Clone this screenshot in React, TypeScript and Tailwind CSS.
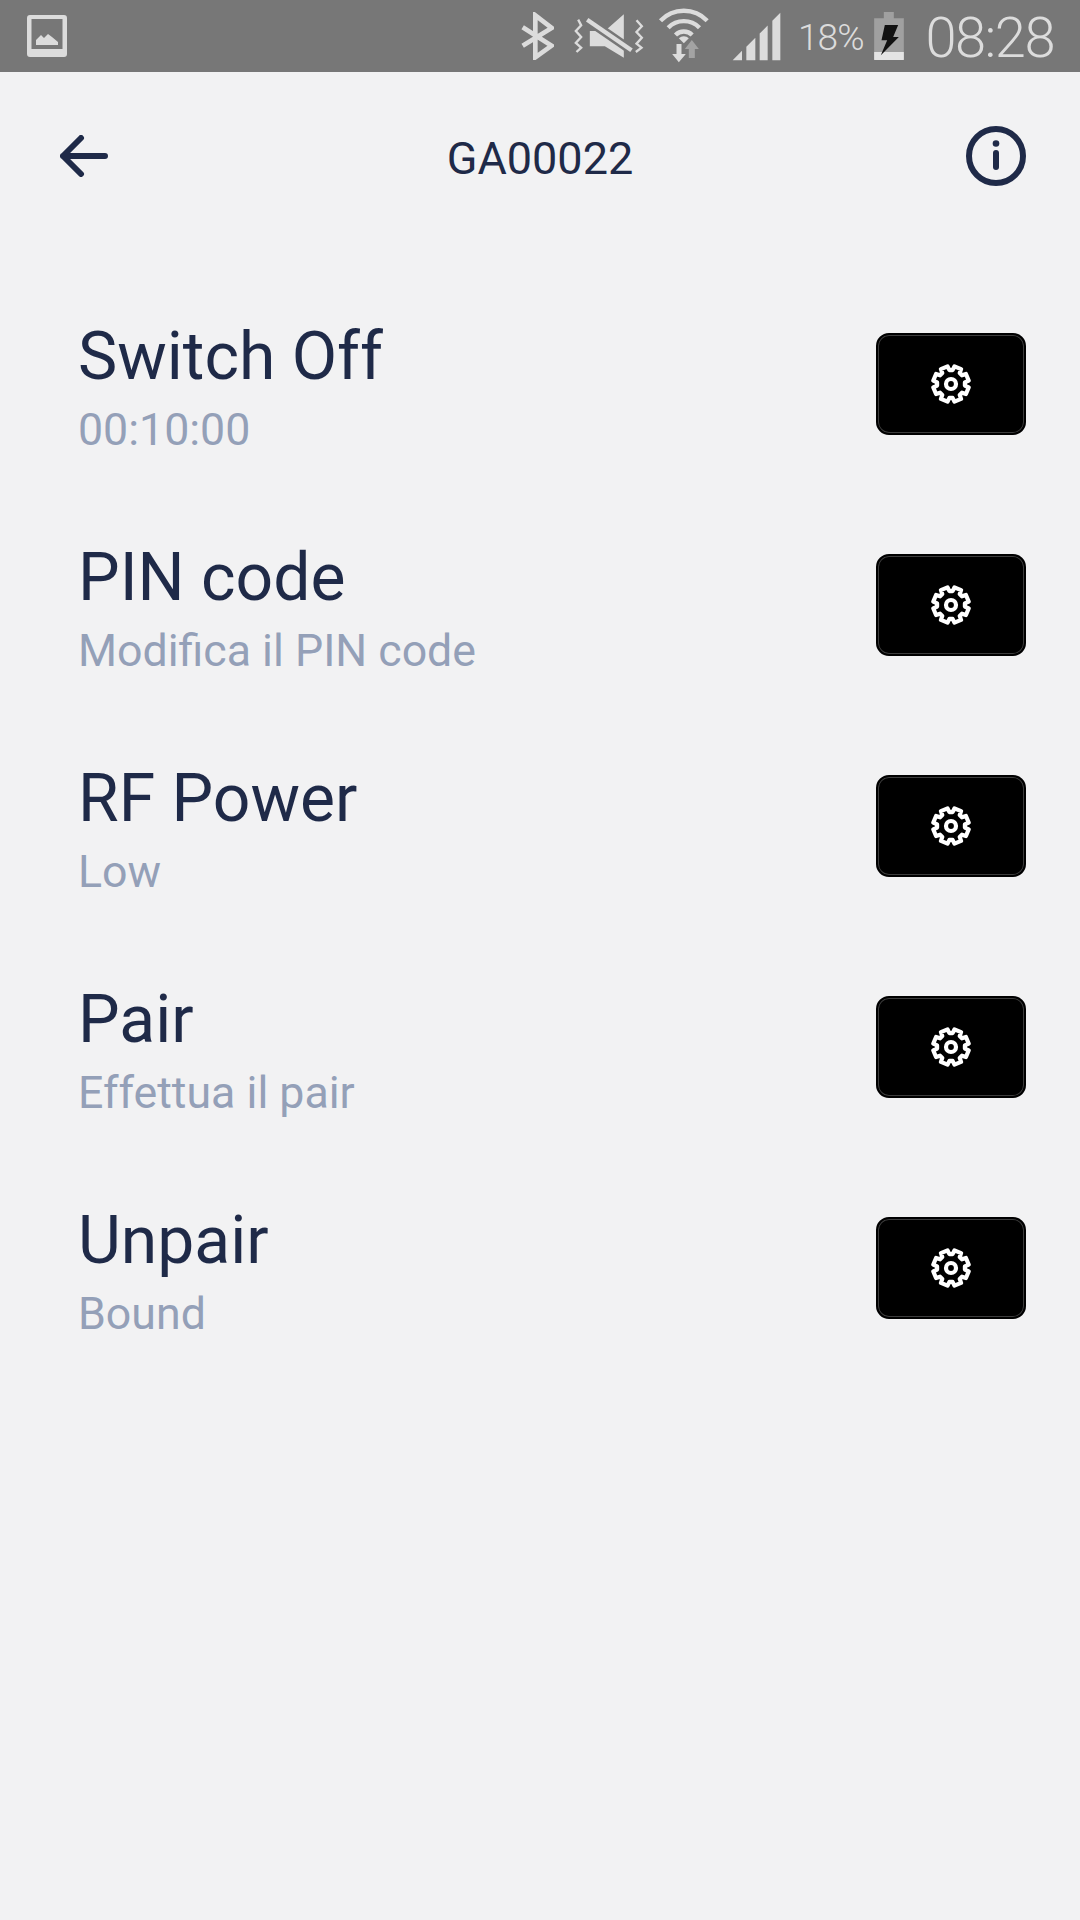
const rows = [
    { title: 'Switch Off', subtitle: '00:10:00' },
    { title: 'PIN code', subtitle: 'Modifica il PIN code' },
    { title: 'RF Power', subtitle: 'Low' },
    { title: 'Pair', subtitle: 'Effettua il pair' },
    { title: 'Unpair', subtitle: 'Bound' },
];

// eight rounded teeth, same shape as the icon in the buttons
function gearPath() {
    const pts: string[] = [];
    for (let i = 0; i < 8; i++) {
        const a = (i * Math.PI) / 4 + Math.PI / 8;
        [
            [-0.28, 14],
            [-0.2, 18],
            [0.2, 18],
            [0.28, 14],
        ].forEach(([d, r]) => {
            pts.push(`${(20 + r * Math.cos(a + d)).toFixed(2)} ${(20 + r * Math.sin(a + d)).toFixed(2)}`);
        });
    }
    return `M${pts.join('L')}Z`;
}

function GearIcon() {
    return (
        <svg width="40" height="40" viewBox="0 0 40 40" fill="none" stroke="#ffffff" strokeWidth="4.2" strokeLinejoin="round">
            <path d={gearPath()} />
            <circle cx="20" cy="20" r="5" />
        </svg>
    );
}

function StatusBar() {
    return (
        <div className="flex h-[72px] items-center bg-[#777777] pl-[27px] pr-[26px] text-[#dcdcdc]">
            <svg width="40" height="42" viewBox="0 0 40 42" fill="#dcdcdc">
                <path
                    fillRule="evenodd"
                    d="M3 0h34a3 3 0 0 1 3 3v36a3 3 0 0 1-3 3H3a3 3 0 0 1-3-3V3a3 3 0 0 1 3-3zM4.500 4v30h31V4z"
                />
                <path d="M9 30v-5l5-5 3 3 4-4 4 3 6 5v3z" />
            </svg>

            {/* right hand icons */}
            <div className="ml-auto flex items-center">
                <svg width="34" height="48" viewBox="30 36 102 144" fill="none" stroke="#dcdcdc" strokeWidth="14">
                    <path d="M38 82l87 55-49 35V46l49 38-87 53" />
                </svg>
                <svg className="ml-[19px]" width="71" height="46" viewBox="190 38 212 138" fill="none">
                    <path d="M205 58l9 17-16 17 16 18-16 18 16 14-14 13M380 60l16 18-16 17 16 17-16 18 15 12-17 13" stroke="#dcdcdc" strokeWidth="7" />
                    <path d="M240 92h45l57-50v130l-57-34h-45z" fill="#dcdcdc" />
                    <path d="M226 54l142 98" stroke="#777777" strokeWidth="28" />
                    <path d="M232 58l133 92" stroke="#dcdcdc" strokeWidth="13" />
                </svg>
                <svg className="ml-[14px]" width="52" height="56" viewBox="445 22 155 168" fill="none">
                    <path d="M452 60A97 97 0 0 1 592 60M475 81A66 66 0 0 1 569 81M497 103A35 35 0 0 1 547 103" stroke="#dcdcdc" strokeWidth="13" />
                    <path d="M522 128L507 113A21 21 0 0 1 537 113z" fill="#dcdcdc" />
                    <path d="M500 130h15v30h13l-21 25-20-25h13z" fill="#dcdcdc" />
                    <path d="M537 172v-27h-12l21-27 21 27h-12v27z" fill="#a3a3a3" />
                </svg>
                <svg className="ml-[22px]" width="49" height="49" viewBox="665 36 147 146" fill="#dcdcdc">
                    <path d="M667 180l28-28v28zM708 180v-40l27-27v67zM748 180v-80l24-24v104zM786 180V62l24-24v142z" />
                </svg>
                <span className="ml-[17px] mt-[2px] text-[37px] leading-none font-light tracking-[-1px]">18%</span>
                <svg className="ml-[10px]" width="32" height="50" viewBox="250 30 95 150">
                    <path d="M282 33h30v19h30v123h-89V52h29z" fill="#a0a0a0" />
                    <path d="M253 153h89v24h-89z" fill="#e4e4e4" />
                    <path d="M285 72h40l-15 36h17l-54 55 19-45h-17z" fill="#111111" />
                </svg>
                <span className="ml-[20px] mt-[4px] text-[56px] leading-none font-light tracking-[-1.5px]">08:28</span>
            </div>
        </div>
    );
}

export default function App() {
    return (
        <div className="flex min-h-[1920px] flex-col bg-[#f2f2f3] font-['Roboto',sans-serif]">
            <StatusBar />

            {/* Header */}
            <div className="grid h-[168px] grid-cols-[1fr_auto_1fr] items-center px-[54px]">
                <svg className="ml-[6px]" width="48" height="42" viewBox="0 0 48 42" fill="none" stroke="#1f2a48" strokeWidth="6" strokeLinecap="round" strokeLinejoin="round">
                    <path d="M3 21h42M21 3L3 21l18 18" />
                </svg>
                <span className="mt-[5px] text-[45px] leading-none text-[#1f2a48]">GA00022</span>
                <svg className="justify-self-end" width="60" height="60" viewBox="0 0 60 60" fill="none" stroke="#1f2a48" strokeLinecap="round">
                    <circle cx="30" cy="30" r="27" strokeWidth="6" />
                    <path d="M30 27v14" strokeWidth="6" />
                    <circle cx="30" cy="17.500" r="3.300" fill="#1f2a48" stroke="none" />
                </svg>
            </div>

            {/* Settings rows */}
            <div className="mt-[33px] flex flex-col">
                {rows.map((row) => (
                    <div key={row.title} className="flex h-[221px] items-center justify-between pl-[78px] pr-[54px]">
                        <div className="flex flex-col pt-[20px]">
                            <span className="text-[66px] leading-[72px] text-[#1f2a48]">{row.title}</span>
                            <span className="text-[44.700px] leading-[74px] text-[#94a0b8]">{row.subtitle}</span>
                        </div>
                        <button className="flex h-[102px] w-[150px] items-center justify-center rounded-[13px] border-2 border-black bg-black shadow-[inset_0_0_0_1px_#3c3c3c]">
                            <GearIcon />
                        </button>
                    </div>
                ))}
            </div>
        </div>
    );
}
